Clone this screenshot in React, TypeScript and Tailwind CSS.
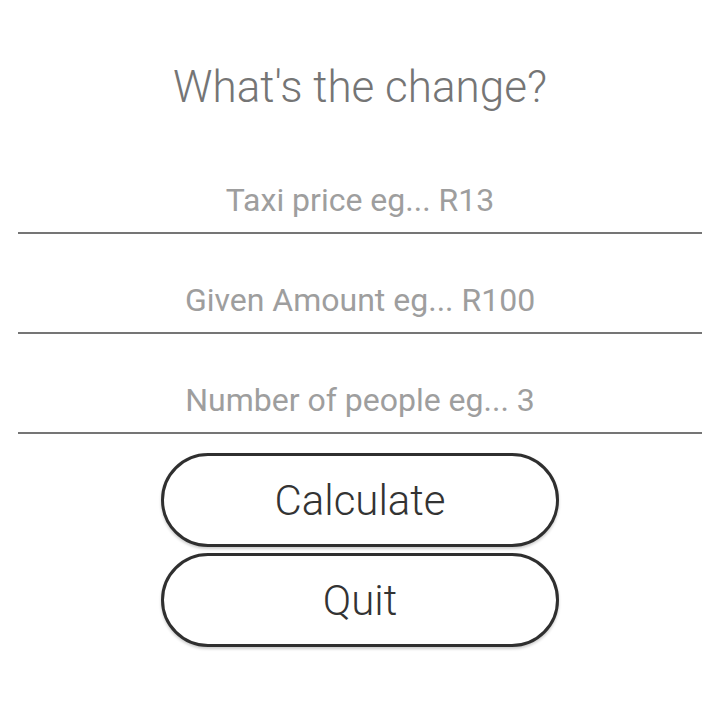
const fields = [
  "Taxi price eg... R13",
  "Given Amount eg... R100",
  "Number of people eg... 3",
];

export default function App() {
  return (
    <div className="flex min-h-[719px] flex-col items-center bg-white font-['Roboto',sans-serif]">
      <h1 className="mt-[63px] h-[48px] text-[44px] font-light leading-[48px] text-[#757575]">
        What's the change?
      </h1>

      <div className="mt-[57px] flex w-[684px] flex-col gap-[34px]">
        {fields.map((label) => (
          <input
            key={label}
            type="text"
            placeholder={label}
            className="box-border h-[66px] w-full border-b-2 border-[#757575] bg-transparent text-center text-[32px] text-[#333] outline-none placeholder:text-[#9e9e9e]"
          />
        ))}
      </div>

      <div className="mt-[19px] flex flex-col gap-[6px]">
        <button className="box-border h-[94px] w-[398px] rounded-full border-[3px] border-[#2f2f2f] bg-white text-[42px] font-light text-[#333] shadow-[0_2px_3px_rgba(0,0,0,0.2)]">
          Calculate
        </button>
        <button className="box-border h-[94px] w-[398px] rounded-full border-[3px] border-[#2f2f2f] bg-white text-[42px] font-light text-[#333] shadow-[0_2px_3px_rgba(0,0,0,0.2)]">
          Quit
        </button>
      </div>
    </div>
  );
}
